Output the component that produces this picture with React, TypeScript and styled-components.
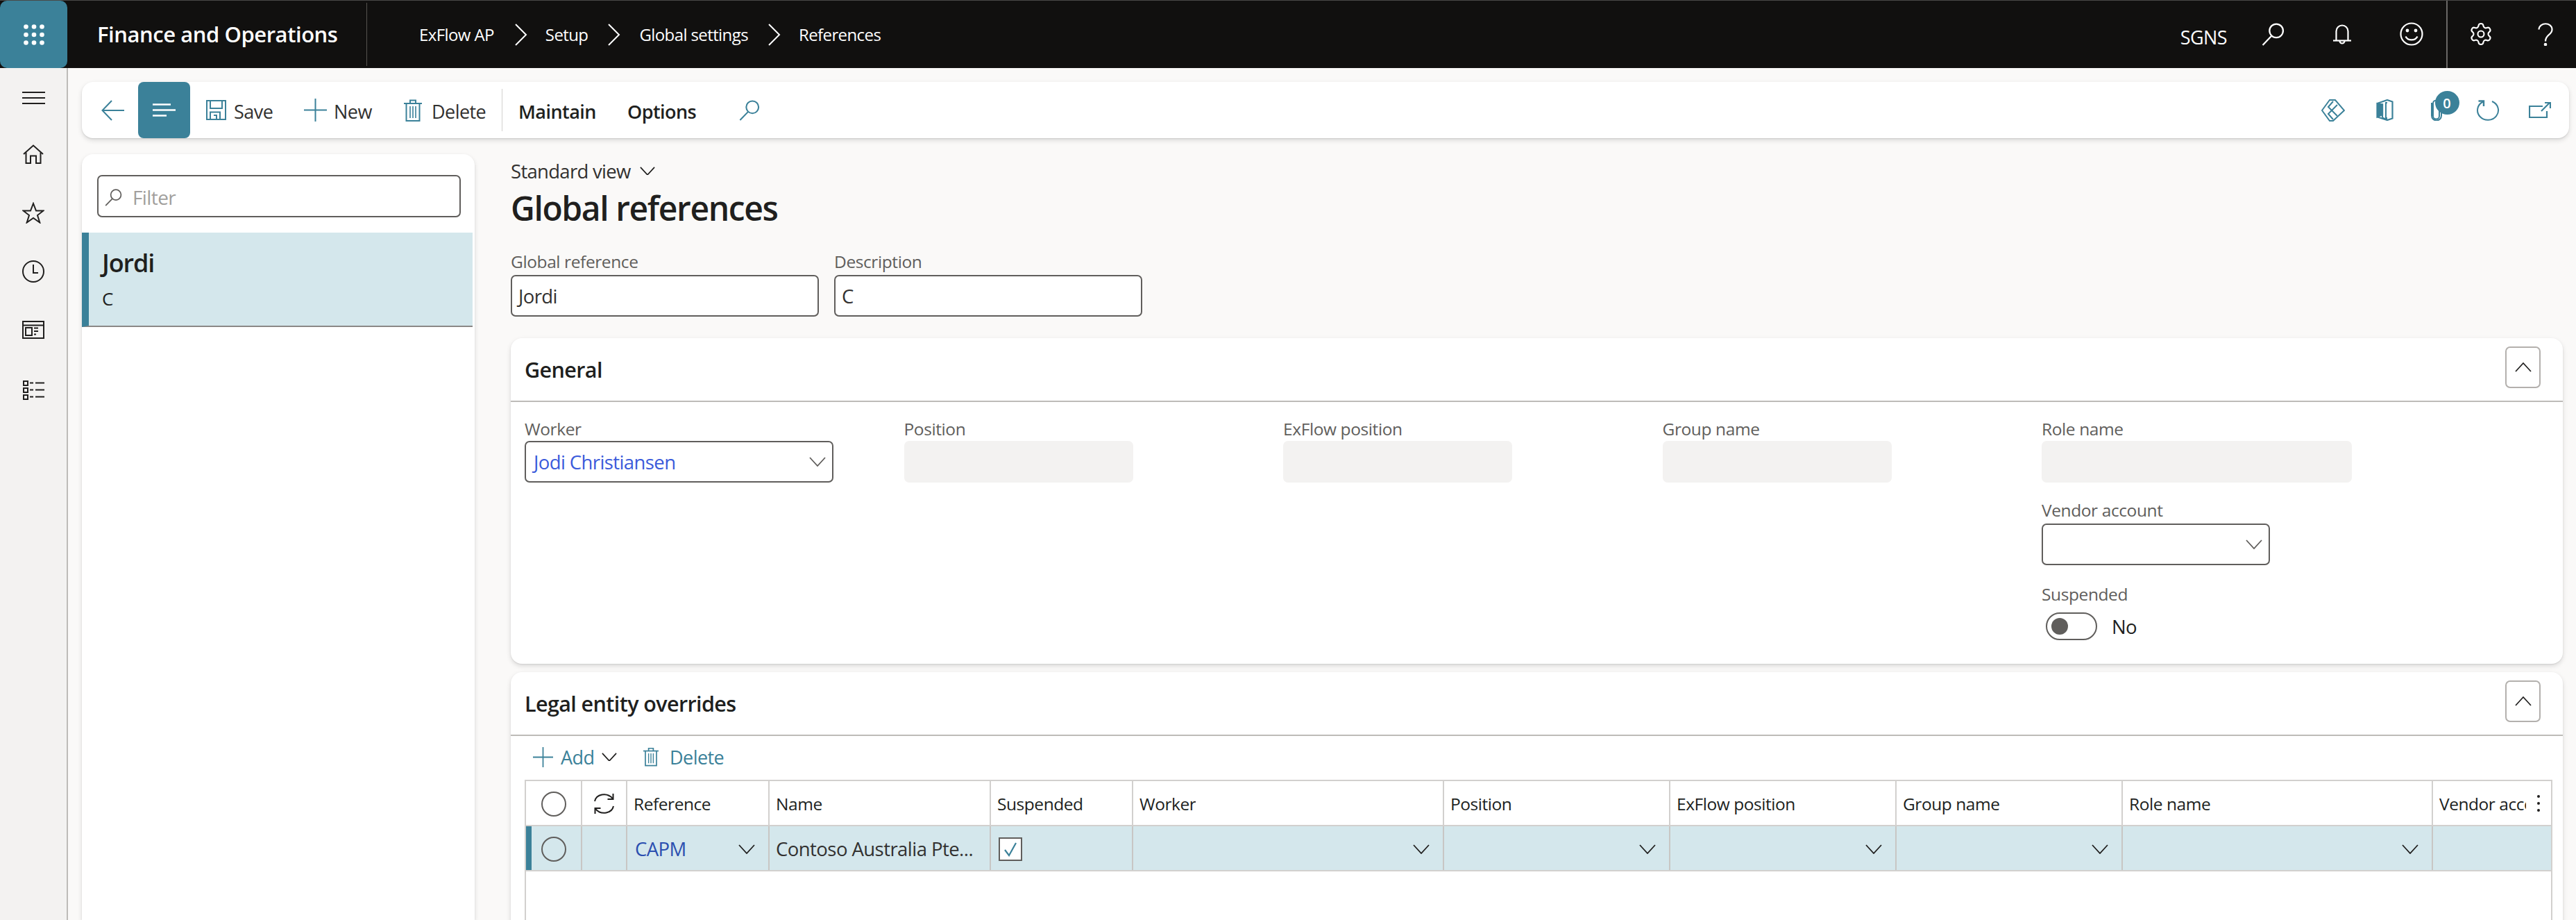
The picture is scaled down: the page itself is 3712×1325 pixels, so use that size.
import React from 'react';
import styled, { createGlobalStyle } from 'styled-components';
import { Settings } from 'lucide-react';

const teal = '#3b8199';
const ink = '#201f1e';
const muted = '#605e5c';

const GlobalStyle = createGlobalStyle`
  html, body {
    margin: 0;
    padding: 0;
    background: #faf9f8;
  }
  * {
    box-sizing: border-box;
  }
  body {
    font-family: "Open Sans", "Noto Sans", "Liberation Sans", sans-serif;
    color: ${ink};
  }
`;

const Page = styled.div`
  width: 3712px;
  height: 1325px;
  overflow: hidden;
  display: flex;
  flex-direction: column;
  background: #faf9f8;
`;

/* ---------- top bar ---------- */

const TopBar = styled.header`
  flex: none;
  height: 98px;
  display: flex;
  align-items: stretch;
  background: #11100f;
  border-top: 1px solid #4a4948;
  color: #fff;
`;

const Launcher = styled.div`
  width: 97px;
  display: flex;
  align-items: center;
  justify-content: center;
  background: ${teal};
  border-radius: 10px;
`;

const Brand = styled.div`
  width: 432px;
  padding-left: 43px;
  display: flex;
  align-items: center;
  font-size: 31px;
  font-weight: 600;
  letter-spacing: -0.45px;
  border-right: 1px solid #55534f;
  margin: 3px 0;
  padding-bottom: 2px;
`;

const Crumbs = styled.nav`
  display: flex;
  align-items: center;
  padding-left: 75px;
  font-size: 24px;
  letter-spacing: -0.6px;
`;

const Crumb = styled.span`
  white-space: nowrap;
`;

const CrumbGap = styled.span<{ $l: number; $r: number }>`
  display: flex;
  align-items: center;
  margin: 0 ${(p) => p.$r}px 0 ${(p) => p.$l}px;
`;

const TopTools = styled.div`
  margin-left: auto;
  display: flex;
  align-items: center;
`;

const Company = styled.span`
  font-size: 27px;
  letter-spacing: -0.6px;
  margin-right: 17px;
  margin-top: 7px;
`;

const TopCell = styled.div<{ $w?: number; $split?: boolean }>`
  width: ${(p) => p.$w ?? 99.5}px;
  height: 97px;
  display: flex;
  align-items: center;
  justify-content: center;
  border-left: ${(p) => (p.$split ? '2px solid #6a6866' : 'none')};
  padding-bottom: 1px;
`;

/* ---------- shell ---------- */

const Body = styled.div`
  flex: 1;
  min-height: 0;
  display: flex;
`;

const Rail = styled.aside`
  flex: none;
  width: 98px;
  background: #f3f2f1;
  border-right: 2px solid #bdbbb8;
  display: flex;
  flex-direction: column;
  align-items: center;
  padding-top: 34px;
`;

const RailItem = styled.div<{ $h: number }>`
  height: ${(p) => p.$h}px;
  display: flex;
  align-items: flex-start;
  justify-content: center;
`;

const Content = styled.main`
  flex: 1;
  min-width: 0;
  padding: 20px 10px 0 20px;
  display: flex;
  flex-direction: column;
`;

/* ---------- action pane ---------- */

const ActionPane = styled.div`
  flex: none;
  height: 81px;
  display: flex;
  align-items: center;
  background: #fff;
  border-radius: 16px;
  box-shadow: 0 3px 7px rgba(0, 0, 0, 0.13), 0 1px 2px rgba(0, 0, 0, 0.1);
`;

const BackButton = styled.div`
  width: 81px;
  height: 81px;
  display: flex;
  align-items: center;
  padding-left: 28px;
`;

const ActiveButton = styled.div`
  width: 75px;
  height: 81px;
  background: ${teal};
  border-radius: 8px;
  display: flex;
  align-items: center;
  justify-content: center;
`;

const ToolButton = styled.div<{ $w: number; $gap: number; $first?: boolean }>`
  width: ${(p) => p.$w}px;
  flex: none;
  display: flex;
  align-items: center;
  gap: ${(p) => p.$gap}px;
  margin-left: ${(p) => (p.$first ? 23 : 0)}px;
  font-size: 27px;
  letter-spacing: -0.55px;
  color: #323130;
`;

const ToolLabel = styled.span`
  padding-top: 3px;
`;

const PaneDivider = styled.div`
  width: 1px;
  height: 61px;
  background: #d2d0ce;
  margin-right: 23px;
`;

const MenuTab = styled.div<{ $w: number }>`
  width: ${(p) => p.$w}px;
  flex: none;
  font-size: 27px;
  font-weight: 600;
  letter-spacing: -0.55px;
  padding-top: 3px;
`;

const PaneEnd = styled.div`
  margin-left: auto;
  display: flex;
  align-items: center;
  padding-right: 5px;
`;

const PaneIcon = styled.div`
  position: relative;
  width: 74.5px;
  display: flex;
  justify-content: center;
`;

const Badge = styled.span`
  position: absolute;
  left: 35px;
  top: -12px;
  width: 35px;
  height: 34px;
  border-radius: 50%;
  background: ${teal};
  color: #fff;
  font-size: 20px;
  font-weight: 600;
  display: flex;
  align-items: center;
  justify-content: center;
`;

/* ---------- list panel ---------- */

const Columns = styled.div`
  flex: 1;
  min-height: 0;
  display: flex;
  margin-top: 23px;
`;

const ListPanel = styled.section`
  flex: none;
  width: 566px;
  background: #fff;
  border-radius: 16px 16px 0 0;
  box-shadow: 0 3px 7px rgba(0, 0, 0, 0.12), 0 1px 2px rgba(0, 0, 0, 0.08);
  padding-top: 30px;
`;

const FilterBox = styled.div`
  width: 524px;
  height: 61px;
  margin-left: 22px;
  border: 2px solid ${muted};
  border-radius: 7px;
  display: flex;
  align-items: center;
  padding: 3px 0 0 9px;
  gap: 15px;
  font-size: 28px;
  letter-spacing: -0.6px;
  color: #a19f9d;
`;

const ListRow = styled.div`
  width: 563px;
  height: 136px;
  margin-top: 22px;
  background: #d4e7ec;
  border-left: 10px solid ${teal};
  border-bottom: 2px solid #8a8886;
  padding: 21px 0 0 19px;
`;

const RowTitle = styled.div`
  font-size: 36px;
  line-height: 46px;
  font-weight: 600;
  letter-spacing: -1.1px;
`;

const RowSub = styled.div`
  margin-top: 12px;
  font-size: 26px;
  line-height: 32px;
`;

/* ---------- details ---------- */

const Details = styled.section`
  flex: 1;
  min-width: 0;
  margin-left: 52px;
  padding: 10px 9px 0 0;
  display: flex;
  flex-direction: column;
`;

const ViewSwitch = styled.div`
  height: 28px;
  display: flex;
  align-items: center;
  gap: 13px;
  font-size: 27.5px;
  letter-spacing: -0.7px;
  color: #323130;
`;

const PageTitle = styled.h1`
  margin: 9px 0 0;
  height: 62px;
  line-height: 62px;
  font-size: 48px;
  font-weight: 600;
  letter-spacing: -1.4px;
`;

const IdentityRow = styled.div`
  display: flex;
  gap: 22px;
  margin-top: 32px;
`;

const Field = styled.div<{ $below?: number }>`
  margin-top: ${(p) => p.$below ?? 0}px;
`;

const FieldLabel = styled.div<{ $gap?: number }>`
  height: 28px;
  line-height: 28px;
  margin-bottom: ${(p) => p.$gap ?? 3}px;
  font-size: 24.5px;
  font-weight: 500;
  letter-spacing: -0.4px;
  color: ${muted};
  white-space: nowrap;
`;

const TextBox = styled.div<{ $w: number }>`
  width: ${(p) => p.$w}px;
  height: 60px;
  border: 2px solid ${muted};
  border-radius: 7px;
  background: #fff;
  display: flex;
  align-items: center;
  justify-content: space-between;
  padding: 0 9px;
  font-size: 27.5px;
  letter-spacing: -0.6px;
  color: #323130;
`;

const LinkValue = styled.span`
  color: #3b5bdb;
  padding-left: 2px;
`;

const ReadOnlyBox = styled.div<{ $w: number }>`
  width: ${(p) => p.$w}px;
  height: 60px;
  background: #f3f2f1;
  border-radius: 7px;
`;

const Card = styled.section<{ $top: number; $radiusAll?: boolean }>`
  flex: none;
  margin-top: ${(p) => p.$top}px;
  background: #fff;
  border-radius: ${(p) => (p.$radiusAll ? '16px' : '16px 16px 0 0')};
  box-shadow: 0 3px 7px rgba(0, 0, 0, 0.13), 0 1px 2px rgba(0, 0, 0, 0.08);
`;

const CardHeader = styled.div`
  height: 92px;
  border-bottom: 2px solid #bdbbb8;
  display: flex;
  justify-content: space-between;
  padding: 12px 32px 0 20px;
`;

const CardTitle = styled.h2`
  margin: 0;
  padding-top: 2px;
  font-size: 30.5px;
  line-height: 62px;
  font-weight: 600;
  letter-spacing: -0.6px;
`;

const CollapseButton = styled.div`
  width: 51px;
  height: 60px;
  border: 2px solid #b3b0ad;
  border-radius: 7px;
  display: flex;
  align-items: center;
  justify-content: center;
`;

const FieldGrid = styled.div`
  display: grid;
  grid-template-columns: repeat(4, 546.5px) 1fr;
  padding: 25px 0 34px 20px;
`;

const ToggleRow = styled.div`
  display: flex;
  align-items: center;
  gap: 21px;
  margin: 12px 0 0 6px;
  font-size: 27.5px;
  letter-spacing: -0.6px;
`;

const ToggleTrack = styled.span`
  width: 74px;
  height: 40px;
  border: 2px solid ${muted};
  border-radius: 20px;
  display: flex;
  align-items: center;
  padding-left: 6px;
`;

const ToggleThumb = styled.span`
  width: 24px;
  height: 24px;
  border-radius: 50%;
  background: ${muted};
`;

/* ---------- grid ---------- */

const GridActions = styled.div`
  height: 63px;
  display: flex;
  align-items: center;
  padding: 0 0 3px 32px;
  color: ${teal};
  font-size: 27px;
  letter-spacing: -0.55px;
`;

const GridAction = styled.div<{ $w: number; $gap: number }>`
  width: ${(p) => p.$w}px;
  display: flex;
  align-items: center;
  gap: ${(p) => p.$gap}px;
`;

const TableFrame = styled.div`
  margin: 0 15px 0 20px;
  height: 210px;
  border: 2px solid #d2d0ce;
  border-bottom: none;
`;

const GridRow = styled.div<{ $selected?: boolean }>`
  height: 65px;
  display: grid;
  grid-template-columns: 81px 65px 205px 319px 205px 448px 326px 326px 326px 447px minmax(0, 1fr);
  background: ${(p) => (p.$selected ? '#d4e7ec' : '#fff')};
  border-bottom: 2px solid #d2d0ce;
`;

const HeadCell = styled.div<{ $pad?: number }>`
  position: relative;
  min-width: 0;
  display: flex;
  align-items: center;
  justify-content: ${(p) => (p.$pad ? 'flex-start' : 'center')};
  padding: 2px ${(p) => (p.$pad ? 36 : 0)}px 0 ${(p) => p.$pad ?? 0}px;
  border-right: 2px solid #d2d0ce;
  font-size: 24.5px;
  font-weight: 500;
  letter-spacing: -0.45px;
  white-space: nowrap;

  &:last-child {
    border-right: none;
  }
`;

const HeadText = styled.span`
  display: block;
  min-width: 0;
  overflow: hidden;
`;

const RowCell = styled.div<{ $accent?: boolean; $pad?: number }>`
  position: relative;
  display: flex;
  align-items: center;
  justify-content: ${(p) => (p.$accent ? 'center' : 'space-between')};
  padding: 2px ${(p) => (p.$accent ? 0 : 19)}px 0 ${(p) => p.$pad ?? 0}px;
  border-right: 2px solid #c8c6c4;
  font-size: 27.5px;
  letter-spacing: -0.55px;
  color: #323130;
  white-space: nowrap;

  &:last-child {
    border-right: none;
  }

  ${(p) =>
    p.$accent &&
    `&::before {
      content: '';
      position: absolute;
      left: 0;
      top: 0;
      bottom: 0;
      width: 8px;
      background: ${teal};
    }`}
`;

const RowLink = styled.span`
  color: #2b4fb0;
`;

const Radio = styled.span`
  width: 36px;
  height: 36px;
  border: 2px solid ${muted};
  border-radius: 50%;
`;

const CheckBox = styled.span`
  width: 34px;
  height: 34px;
  background: #fff;
  border: 2px solid ${muted};
  display: flex;
  align-items: center;
  justify-content: center;
`;

const Kebab = styled.span`
  position: absolute;
  right: 16px;
  top: 20px;
  display: flex;
  flex-direction: column;
  gap: 6px;

  i {
    display: block;
    width: 4px;
    height: 4px;
    border-radius: 50%;
    background: ${ink};
  }
`;

/* ---------- icons ---------- */

type IconProps = { c?: string; w?: number };

const Chevron = ({ c = muted, size = 24 }: { c?: string; size?: number }) => (
  <svg width={size} height={(size * 14) / 24} viewBox="0 0 24 14" fill="none" stroke={c} strokeWidth="1.8">
    <path d="M1 1l11 12L23 1" />
  </svg>
);

const ChevronUp = () => (
  <svg width="24" height="14" viewBox="0 0 24 14" fill="none" stroke={ink} strokeWidth="1.7">
    <path d="M1 13L12 1l11 12" />
  </svg>
);

const CrumbArrow = () => (
  <svg width="18" height="32" viewBox="0 0 18 32" fill="none" stroke="#fff" strokeWidth="2">
    <path d="M1 1l15 15L1 31" />
  </svg>
);

const Dots = () => (
  <svg width="30" height="30" viewBox="0 0 30 30" fill="#fff">
    {[3.5, 15, 26.5].map((y) =>
      [3.5, 15, 26.5].map((x) => <circle key={`${x}-${y}`} cx={x} cy={y} r="3.3" />)
    )}
  </svg>
);

const Search = ({ c = teal, w = 30 }: IconProps) => (
  <svg width={w} height={w} viewBox="0 0 32 32" fill="none" stroke={c} strokeWidth="2.2">
    <circle cx="20.5" cy="11" r="9.5" />
    <path d="M14 18L1.5 31" />
  </svg>
);

const Bell = () => (
  <svg width="26" height="29" viewBox="0 0 26 29" fill="none" stroke="#fff" strokeWidth="2.2">
    <path d="M4.5 23V10a8.5 8.5 0 0 1 17 0v13" />
    <path d="M0 23.5h26" />
    <path d="M9.5 24a3.5 3.5 0 0 0 7 0" />
  </svg>
);

const Smiley = () => (
  <svg width="34" height="34" viewBox="0 0 34 34" fill="none" stroke="#fff" strokeWidth="2.2">
    <circle cx="17" cy="17" r="15.5" />
    <path d="M8.5 20.5c3 6.5 14 6.5 17 0" />
    <circle cx="11" cy="12" r="1.3" fill="#fff" />
    <circle cx="23" cy="12" r="1.3" fill="#fff" />
  </svg>
);

const Help = () => (
  <svg width="22" height="33" viewBox="0 0 22 33" fill="none" stroke="#fff" strokeWidth="2.2">
    <path d="M1.5 9.5C2 -1.5 20.5 -1.5 20.5 9.5c0 8-9.5 7-9.5 17" />
    <circle cx="11" cy="31" r="1.2" fill="#fff" />
  </svg>
);

const Hamburger = () => (
  <svg width="33" height="18" viewBox="0 0 33 18" stroke={ink} strokeWidth="2">
    <path d="M0 1h33M0 9h33M0 17h33" />
  </svg>
);

const Home = () => (
  <svg width="30" height="28" viewBox="0 0 30 28" fill="none" stroke={ink} strokeWidth="2">
    <path d="M1 14L15 1.5 29 14" />
    <path d="M4.5 11.5V27H11V16.5h8V27h6.5V11.5" />
  </svg>
);

const Star = () => (
  <svg width="32" height="31" viewBox="0 0 32 31" fill="none" stroke={ink} strokeWidth="2">
    <path d="M16 2l4 10.5h10.5L22 19l3.3 10.5L16 23l-9.3 6.5L10 19 1.5 12.5H12z" />
  </svg>
);

const Clock = () => (
  <svg width="32" height="32" viewBox="0 0 32 32" fill="none" stroke={ink} strokeWidth="2">
    <circle cx="16" cy="16" r="15" />
    <path d="M16 6v12h7" />
  </svg>
);

const Workspace = () => (
  <svg width="32" height="26" viewBox="0 0 32 26" fill="none" stroke={ink} strokeWidth="2">
    <path d="M1 1h30v24H1zM1 6.5h30" />
    <path d="M5 10h9v11H5z" />
    <path d="M17 10.5h6M17 15h6M17 19.5h3" />
  </svg>
);

const Checklist = () => (
  <svg width="31" height="28" viewBox="0 0 31 28" fill="none" stroke={ink} strokeWidth="2">
    <path d="M1 1h6v6H1zM1 11h6v6H1zM1 21h6v6H1z" />
    <path d="M10 3.5h5M18 3.5h13M10 13.5h5M18 13.5h13M10 23.5h5M18 23.5h13" />
  </svg>
);

const BackArrow = () => (
  <svg width="33" height="30" viewBox="0 0 33 30" fill="none" stroke={teal} strokeWidth="2">
    <path d="M15 1L1.5 15 15 29M2 15h31" />
  </svg>
);

const Lines = () => (
  <svg width="33" height="19" viewBox="0 0 33 19" stroke="#fff" strokeWidth="2.4">
    <path d="M0 1.5h26M0 9.5h33M0 17.5h20" />
  </svg>
);

const Save = () => (
  <svg width="29" height="29" viewBox="0 0 29 29" fill="none" stroke={teal} strokeWidth="2">
    <path d="M1 1h27v27H1z" />
    <path d="M6 1v11h17V1" />
    <path d="M6 28V17.5h14V28" />
    <path d="M11 22h4v6" />
  </svg>
);

const Plus = ({ w = 33 }: IconProps) => (
  <svg width={w} height={w} viewBox="0 0 33 33" stroke={teal} strokeWidth="2">
    <path d="M16.5 0v33M0 16.5h33" />
  </svg>
);

const Trash = ({ w = 26, h = 32 }: { w?: number; h?: number }) => (
  <svg width={w} height={h} viewBox="0 0 26 32" fill="none" stroke={teal} strokeWidth="2">
    <path d="M0 6h26" />
    <path d="M9 6V1.5h8V6" />
    <path d="M3.5 6v25h19V6" />
    <path d="M9 10v17M13 10v17M17 10v17" strokeWidth="1.6" />
  </svg>
);

const Diamonds = () => (
  <svg width="34" height="32" viewBox="0 0 34 32" fill="none" stroke={teal} strokeWidth="2">
    <path d="M12 1L1 16l11 15h5l16-15L20 1z" />
    <path d="M17 3l-7 8 13 13" />
    <path d="M23 8L10 21l7 8" />
  </svg>
);

const OfficeDoor = () => (
  <svg width="25" height="31" viewBox="0 0 25 31" fill="none" stroke={teal} strokeWidth="2.2">
    <path d="M1.5 6L16 1l7.5 2.5v24L16 30 2 25.5" />
    <path d="M9 26.5V6.5" />
    <path d="M1.5 6v19.5L9 22V7.5z" fill={teal} />
    <path d="M9 26.5l7 3" />
    <path d="M16 5h-2v22h2" strokeWidth="2" />
  </svg>
);

const Clip = () => (
  <svg width="16" height="31" viewBox="0 0 16 31" fill="none" stroke={teal} strokeWidth="2">
    <path d="M12 7v17a4.5 4.5 0 0 1-9 0V6a4.5 4.5 0 0 1 9 0" />
    <path d="M15 8v15.5a7 7 0 0 1-14 0V5" />
  </svg>
);

const Refresh = () => (
  <svg width="34" height="32" viewBox="0 0 34 32" fill="none" stroke={teal} strokeWidth="2">
    <path d="M10 3.5A15 14 0 1 0 23 3" />
    <path d="M3.5 2.5H11V10" strokeWidth="2.4" />
  </svg>
);

const OpenOut = () => (
  <svg width="32" height="23" viewBox="0 0 32 23" fill="none" stroke={teal} strokeWidth="2.2">
    <path d="M20 6H1v16h25v-9" />
    <path d="M18 13L30 1M23 1h8v8" />
  </svg>
);

const SyncIcon = () => (
  <svg width="33" height="33" viewBox="0 0 33 33" fill="none" stroke={ink} strokeWidth="2">
    <path d="M3 13C5 3 20 -1 29 9" />
    <path d="M29.5 2v8h-8" />
    <path d="M30 20C28 30 13 34 4 24" />
    <path d="M3.5 31v-8h8" />
  </svg>
);

const Tick = () => (
  <svg width="22" height="22" viewBox="0 0 22 22" fill="none" stroke={teal} strokeWidth="2.2">
    <path d="M3 12l6 8L19 2" />
  </svg>
);

const headColumns = ['Reference', 'Name', 'Suspended', 'Worker', 'Position', 'ExFlow position', 'Group name', 'Role name'];

const App = () => (
  <Page>
    <GlobalStyle />
    <TopBar>
      <Launcher>
        <Dots />
      </Launcher>
      <Brand>Finance and Operations</Brand>
      <Crumbs>
        <Crumb>ExFlow AP</Crumb>
        <CrumbGap $l={30} $r={26}><CrumbArrow /></CrumbGap>
        <Crumb>Setup</Crumb>
        <CrumbGap $l={29} $r={27}><CrumbArrow /></CrumbGap>
        <Crumb>Global settings</Crumb>
        <CrumbGap $l={29} $r={26}><CrumbArrow /></CrumbGap>
        <Crumb>References</Crumb>
      </Crumbs>
      <TopTools>
        <Company>SGNS</Company>
        <TopCell><Search c="#fff" w={33} /></TopCell>
        <TopCell><Bell /></TopCell>
        <TopCell><Smiley /></TopCell>
        <TopCell $split><Settings color="#fff" size={36} strokeWidth={1.4} /></TopCell>
        <TopCell $w={88}><Help /></TopCell>
      </TopTools>
    </TopBar>
    <Body>
      <Rail>
        <RailItem $h={76}><Hamburger /></RailItem>
        <RailItem $h={83}><Home /></RailItem>
        <RailItem $h={84}><Star /></RailItem>
        <RailItem $h={87}><Clock /></RailItem>
        <RailItem $h={86}><Workspace /></RailItem>
        <RailItem $h={40}><Checklist /></RailItem>
      </Rail>
      <Content>
        <ActionPane>
          <BackButton><BackArrow /></BackButton>
          <ActiveButton><Lines /></ActiveButton>
          <ToolButton $w={141} $gap={11} $first><Save /><ToolLabel>Save</ToolLabel></ToolButton>
          <ToolButton $w={144} $gap={10}><Plus /><ToolLabel>New</ToolLabel></ToolButton>
          <ToolButton $w={141} $gap={14}><Trash /><ToolLabel>Delete</ToolLabel></ToolButton>
          <PaneDivider />
          <MenuTab $w={157}>Maintain</MenuTab>
          <MenuTab $w={161}>Options</MenuTab>
          <Search w={30} />
          <PaneEnd>
            <PaneIcon><Diamonds /></PaneIcon>
            <PaneIcon><OfficeDoor /></PaneIcon>
            <PaneIcon><Clip /><Badge>0</Badge></PaneIcon>
            <PaneIcon><Refresh /></PaneIcon>
            <PaneIcon><OpenOut /></PaneIcon>
          </PaneEnd>
        </ActionPane>
        <Columns>
          <ListPanel>
            <FilterBox><Search c={muted} w={25} />Filter</FilterBox>
            <ListRow>
              <RowTitle>Jordi</RowTitle>
              <RowSub>C</RowSub>
            </ListRow>
          </ListPanel>
          <Details>
            <ViewSwitch>Standard view <Chevron c={ink} size={22} /></ViewSwitch>
            <PageTitle>Global references</PageTitle>
            <IdentityRow>
              <Field>
                <FieldLabel $gap={5}>Global reference</FieldLabel>
                <TextBox $w={444}>Jordi</TextBox>
              </Field>
              <Field>
                <FieldLabel $gap={5}>Description</FieldLabel>
                <TextBox $w={444}>C</TextBox>
              </Field>
            </IdentityRow>
            <Card $top={31} $radiusAll>
              <CardHeader>
                <CardTitle>General</CardTitle>
                <CollapseButton><ChevronUp /></CollapseButton>
              </CardHeader>
              <FieldGrid>
                <Field>
                  <FieldLabel>Worker</FieldLabel>
                  <TextBox $w={445}>
                    <LinkValue>Jodi Christiansen</LinkValue>
                    <Chevron />
                  </TextBox>
                </Field>
                <Field>
                  <FieldLabel>Position</FieldLabel>
                  <ReadOnlyBox $w={330} />
                </Field>
                <Field>
                  <FieldLabel>ExFlow position</FieldLabel>
                  <ReadOnlyBox $w={330} />
                </Field>
                <Field>
                  <FieldLabel>Group name</FieldLabel>
                  <ReadOnlyBox $w={330} />
                </Field>
                <div>
                  <Field>
                    <FieldLabel>Role name</FieldLabel>
                    <ReadOnlyBox $w={447} />
                  </Field>
                  <Field $below={26}>
                    <FieldLabel $gap={5}>Vendor account</FieldLabel>
                    <TextBox $w={329}>
                      <span />
                      <Chevron />
                    </TextBox>
                  </Field>
                  <Field $below={28}>
                    <FieldLabel>Suspended</FieldLabel>
                    <ToggleRow>
                      <ToggleTrack><ToggleThumb /></ToggleTrack>
                      No
                    </ToggleRow>
                  </Field>
                </div>
              </FieldGrid>
            </Card>
            <Card $top={12}>
              <CardHeader>
                <CardTitle>Legal entity overrides</CardTitle>
                <CollapseButton><ChevronUp /></CollapseButton>
              </CardHeader>
              <GridActions>
                <GridAction $w={159} $gap={11}>
                  <Plus w={29} />
                  Add
                  <Chevron c={ink} size={22} />
                </GridAction>
                <GridAction $w={140} $gap={16}>
                  <Trash w={22} h={28} />
                  Delete
                </GridAction>
              </GridActions>
              <TableFrame>
                <GridRow>
                  <HeadCell><Radio /></HeadCell>
                  <HeadCell><SyncIcon /></HeadCell>
                  {headColumns.map((name) => (
                    <HeadCell key={name} $pad={9}><HeadText>{name}</HeadText></HeadCell>
                  ))}
                  <HeadCell $pad={9}>
                    <HeadText>Vendor account</HeadText>
                    <Kebab><i /><i /><i /></Kebab>
                  </HeadCell>
                </GridRow>
                <GridRow $selected>
                  <RowCell $accent><Radio /></RowCell>
                  <RowCell />
                  <RowCell $pad={11}>
                    <RowLink>CAPM</RowLink>
                    <Chevron c={ink} />
                  </RowCell>
                  <RowCell $pad={9}>Contoso Australia Pte...</RowCell>
                  <RowCell $pad={11}>
                    <CheckBox><Tick /></CheckBox>
                  </RowCell>
                  <RowCell $pad={9}><span /><Chevron c={ink} /></RowCell>
                  <RowCell $pad={9}><span /><Chevron c={ink} /></RowCell>
                  <RowCell $pad={9}><span /><Chevron c={ink} /></RowCell>
                  <RowCell $pad={9}><span /><Chevron c={ink} /></RowCell>
                  <RowCell $pad={9}><span /><Chevron c={ink} /></RowCell>
                  <RowCell />
                </GridRow>
              </TableFrame>
            </Card>
          </Details>
        </Columns>
      </Content>
    </Body>
  </Page>
);

export default App;
